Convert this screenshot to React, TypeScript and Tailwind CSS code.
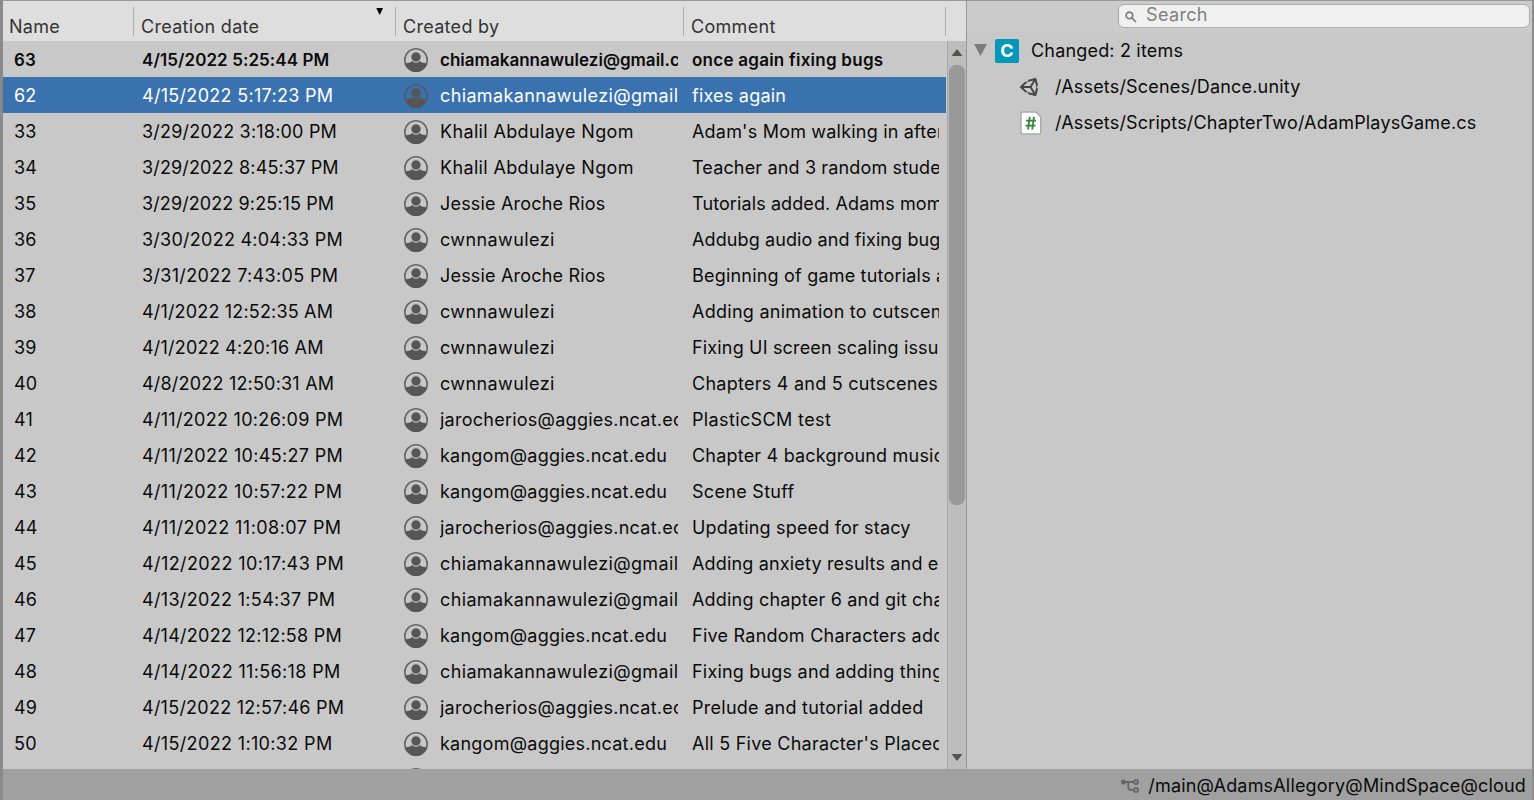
import { FaUnity } from "react-icons/fa";

/** Each cell is a text paired with the letter spacing it is set in. */
type Cell = [text: string, tracking: string];

type Changeset = {
  id: string;
  date: Cell;
  author: Cell;
  comment: Cell;
};

const chiamaka: Cell = ["chiamakannawulezi@gmail.com", "tracking-[0.37px]"];
const khalil: Cell = ["Khalil Abdulaye Ngom", "tracking-[0.35px]"];
const jessie: Cell = ["Jessie Aroche Rios", "tracking-[0.18px]"];
const cwnna: Cell = ["cwnnawulezi", "tracking-[0.4px]"];
const jaroche: Cell = ["jarocherios@aggies.ncat.edu", "tracking-[0.25px]"];
const kangom: Cell = ["kangom@aggies.ncat.edu", "tracking-[0.24px]"];

const changesets: Changeset[] = [
  { id: "63", date: ["4/15/2022 5:25:44 PM", "tracking-[0.08px]"], author: ["chiamakannawulezi@gmail.com", "tracking-[0.02px]"], comment: ["once again fixing bugs", "tracking-[0.25px]"] },
  { id: "62", date: ["4/15/2022 5:17:23 PM", "tracking-[0.3px]"], author: chiamaka, comment: ["fixes again", "tracking-[0.22px]"] },
  { id: "33", date: ["3/29/2022 3:18:00 PM", "tracking-[0.2px]"], author: khalil, comment: ["Adam's Mom walking in after", "tracking-[0.2px]"] },
  { id: "34", date: ["3/29/2022 8:45:37 PM", "tracking-[0.15px]"], author: khalil, comment: ["Teacher and 3 random students", "tracking-[0.15px]"] },
  { id: "35", date: ["3/29/2022 9:25:15 PM", "tracking-[0.1px]"], author: jessie, comment: ["Tutorials added. Adams mom", "tracking-[0.1px]"] },
  { id: "36", date: ["3/30/2022 4:04:33 PM", "tracking-[0.25px]"], author: cwnna, comment: ["Addubg audio and fixing bugs", "tracking-[0.1px]"] },
  { id: "37", date: ["3/31/2022 7:43:05 PM", "tracking-[0.33px]"], author: jessie, comment: ["Beginning of game tutorials and", "tracking-[0.2px]"] },
  { id: "38", date: ["4/1/2022 12:52:35 AM", "tracking-[0.17px]"], author: cwnna, comment: ["Adding animation to cutscenes", "tracking-[0.27px]"] },
  { id: "39", date: ["4/1/2022 4:20:16 AM", "tracking-[0.2px]"], author: cwnna, comment: ["Fixing UI screen scaling issues", "tracking-[0.17px]"] },
  { id: "40", date: ["4/8/2022 12:50:31 AM", "tracking-[0.2px]"], author: cwnna, comment: ["Chapters 4 and 5 cutscenes", "tracking-[0.25px]"] },
  { id: "41", date: ["4/11/2022 10:26:09 PM", "tracking-[0.3px]"], author: jaroche, comment: ["PlasticSCM test", "tracking-[0.37px]"] },
  { id: "42", date: ["4/11/2022 10:45:27 PM", "tracking-[0.33px]"], author: kangom, comment: ["Chapter 4 background music", "tracking-[0.2px]"] },
  { id: "43", date: ["4/11/2022 10:57:22 PM", "tracking-[0.35px]"], author: kangom, comment: ["Scene Stuff", "tracking-[0.3px]"] },
  { id: "44", date: ["4/11/2022 11:08:07 PM", "tracking-[0.45px]"], author: jaroche, comment: ["Updating speed for stacy", "tracking-[0.17px]"] },
  { id: "45", date: ["4/12/2022 10:17:43 PM", "tracking-[0.4px]"], author: chiamaka, comment: ["Adding anxiety results and ending", "tracking-[0.17px]"] },
  { id: "46", date: ["4/13/2022 1:54:37 PM", "tracking-[0.33px]"], author: chiamaka, comment: ["Adding chapter 6 and git changes", "tracking-[0.2px]"] },
  { id: "47", date: ["4/14/2022 12:12:58 PM", "tracking-[0.25px]"], author: kangom, comment: ["Five Random Characters added", "tracking-[0.25px]"] },
  { id: "48", date: ["4/14/2022 11:56:18 PM", "tracking-[0.35px]"], author: chiamaka, comment: ["Fixing bugs and adding things", "tracking-[0.2px]"] },
  { id: "49", date: ["4/15/2022 12:57:46 PM", "tracking-[0.25px]"], author: jaroche, comment: ["Prelude and tutorial added", "tracking-[0.27px]"] },
  { id: "50", date: ["4/15/2022 1:10:32 PM", "tracking-[0.35px]"], author: kangom, comment: ["All 5 Five Character's Placed", "tracking-[0.25px]"] },
  { id: "", date: ["", ""], author: ["", ""], comment: ["", ""] },
];

function Avatar() {
  return (
    <svg className="size-[26px] shrink-0" viewBox="0 0 26 26">
      <circle cx="13" cy="13" r="11.2" fill="none" stroke="#565656" strokeOpacity="0.85" strokeWidth="1.6" />
      <circle cx="13" cy="10" r="4.7" fill="#565656" />
      <path d="M1.8 17C3.5 16 5.5 15.7 7.2 15.5C8 14.8 8.5 14.3 9 14C11 16.3 15 16.3 17 14C17.5 14.3 18 14.8 18.8 15.5C20.5 15.7 22.5 16 24.2 17A11.8 11.8 0 0 1 1.8 17Z" fill="#565656" />
    </svg>
  );
}

function ScriptIcon() {
  return (
    <svg className="h-6 w-6 shrink-0" viewBox="0 0 24 24">
      <path d="M2.5 1H16L20.7 5.7V21.5A1.5 1.5 0 0 1 19.2 23H2.5A1.5 1.5 0 0 1 1 21.5V2.5A1.5 1.5 0 0 1 2.5 1Z" fill="#fff" stroke="#aaa" strokeWidth="1.4" />
      <path d="M9.8 5.8L8 18.5M14 5.8L12.2 18.5M6 9.7H16M5.5 14.6H15.5" stroke="#39843b" strokeWidth="1.8" fill="none" />
    </svg>
  );
}

function HeaderCell({ label, className }: { label: string; className: string }) {
  return (
    <div className={`relative h-10 shrink-0 pt-[15px] text-[18px] leading-[22px] tracking-[0.3px] text-[#333] ${className}`}>
      {label}
      <span className="absolute top-[6px] right-0 h-[29px] w-px bg-[#adadad]" />
    </div>
  );
}

function Row({ item, bold, selected }: { item: Changeset; bold: boolean; selected: boolean }) {
  const tone = selected ? "bg-[#3a72b0] text-white" : "text-[#0b0b0b]";
  const weight = bold ? "text-[17px] font-semibold tracking-[0.1px]" : "tracking-[0.2px]";
  return (
    <div className={`flex h-9 shrink-0 items-center pt-[2px] leading-[24px] whitespace-pre ${tone} ${weight}`}>
      <div className="w-[131px] shrink-0 pl-[11px]">{item.id}</div>
      <div className={`w-[261px] shrink-0 pl-2 ${item.date[1]}`}>{item.date[0]}</div>
      <div className="flex w-[297px] shrink-0 items-center pl-[8px]">
        <Avatar />
        <div className={`ml-[11px] w-[238px] overflow-hidden ${item.author[1]}`}>{item.author[0]}</div>
      </div>
      <div className={`w-[247px] shrink-0 overflow-hidden ${item.comment[1]}`}>{item.comment[0]}</div>
    </div>
  );
}

export default function App() {
  return (
    <div className="flex h-[800px] w-[1534px] flex-col overflow-hidden border-t border-r-2 border-l-3 border-t-[#999] border-r-[#8d8d8d] border-l-[#8a8a8a] bg-[#c8c8c8] font-['Inter',sans-serif] text-[18px] leading-[24px] tracking-[0.18px] text-[#0b0b0b]">
      <div className="flex h-[768px] shrink-0">
        <section className="flex w-[964px] shrink-0 flex-col border-r border-[#999]">
          <div className="flex h-10 shrink-0 bg-[#dedede]">
            <HeaderCell label="Name" className="w-[131px] pl-[6px]" />
            <div className="relative">
              <HeaderCell label="Creation date" className="w-[262px] pl-[7px]" />
              <svg className="absolute top-[7px] right-[12px] h-[7px] w-[8px]" viewBox="0 0 8 7">
                <path d="M0.3 0H7L3.7 7Z" fill="#000" />
              </svg>
            </div>
            <HeaderCell label="Created by" className="w-[288px] pl-[7px]" />
            <HeaderCell label="Comment" className="w-[262px] pl-[7px]" />
          </div>
          <div className="flex h-[728px]">
            <div className="flex w-[943px] shrink-0 flex-col overflow-hidden">
              {changesets.map((item, index) => (
                <Row key={index} item={item} bold={index === 0} selected={index === 1} />
              ))}
            </div>
            <div className="ml-[1px] flex w-[19px] flex-col items-center border-l border-[#a8a8a8] bg-[#bdbdbd] pt-2 pb-2">
              <svg className="h-[7px] w-[12px] shrink-0" viewBox="0 0 12 7">
                <path d="M0.5 7L6 0L11.5 7Z" fill="#54544c" />
              </svg>
              <div className="mt-[9px] h-[440px] w-4 shrink-0 rounded-full bg-[#999] shadow-[0_0_1px_#999]" />
              <svg className="mt-auto h-[7px] w-[12px] shrink-0" viewBox="0 0 12 7">
                <path d="M0.5 0H11.5L6 7Z" fill="#54544c" />
              </svg>
            </div>
          </div>
        </section>
        <section className="flex flex-1 flex-col">
          <div className="flex h-[31px] shrink-0 justify-end bg-[#cbcbcb] pt-[3px] pr-[2px]">
            <div className="flex h-6 w-[412px] items-center rounded-[6px] border border-[#adadad] bg-[#f0f0f0] pl-[6px] tracking-[0.35px] text-[#808080]">
              <svg className="mt-[2px] size-[12px]" viewBox="0 0 12 12" fill="none" stroke="#7c7c7c" strokeWidth="1.7">
                <circle cx="4.4" cy="4.4" r="3.3" />
                <path d="M6.8 6.8L11 11" />
              </svg>
              <span className="-mt-[2px] ml-[9px]">Search</span>
            </div>
          </div>
          <div className="flex h-9 items-center pl-[7px]">
            <svg className="h-3 w-[13px]" viewBox="0 0 13 12">
              <path d="M0 0H13L6.5 12Z" fill="#7b7b7b" />
            </svg>
            <span className="mt-[2px] ml-2 flex size-6 items-center justify-center rounded-[2px] bg-[#0398ba] text-[18px] font-bold tracking-normal text-white">C</span>
            <span className="mt-[2px] ml-3">Changed: 2 items</span>
          </div>
          <div className="flex h-9 items-center pt-[2px] pl-[52px]">
            <FaUnity className="-mt-px size-[22px] shrink-0 text-[#444]" />
            <span className="ml-[14px]">/Assets/Scenes/Dance.unity</span>
          </div>
          <div className="flex h-9 items-center pt-[2px] pl-[53px]">
            <ScriptIcon />
            <span className="ml-[11px]">/Assets/Scripts/ChapterTwo/AdamPlaysGame.cs</span>
          </div>
        </section>
      </div>
      <footer className="flex h-[31px] shrink-0 items-center justify-end bg-[#a0a0a0] pt-[3px] pr-[6px]">
        <svg className="mr-[9px] h-[14px] w-[18px]" viewBox="0 0 18 14" fill="none" stroke="#686868" strokeWidth="1.9">
          <circle cx="2.3" cy="3" r="1.6" fill="#686868" />
          <circle cx="15" cy="3" r="2" />
          <circle cx="15" cy="11" r="2" />
          <path d="M3 3H13M7.3 3V8C7.3 10 8.5 11 10 11H13" />
        </svg>
        <span>/main@AdamsAllegory@MindSpace@cloud</span>
      </footer>
    </div>
  );
}
